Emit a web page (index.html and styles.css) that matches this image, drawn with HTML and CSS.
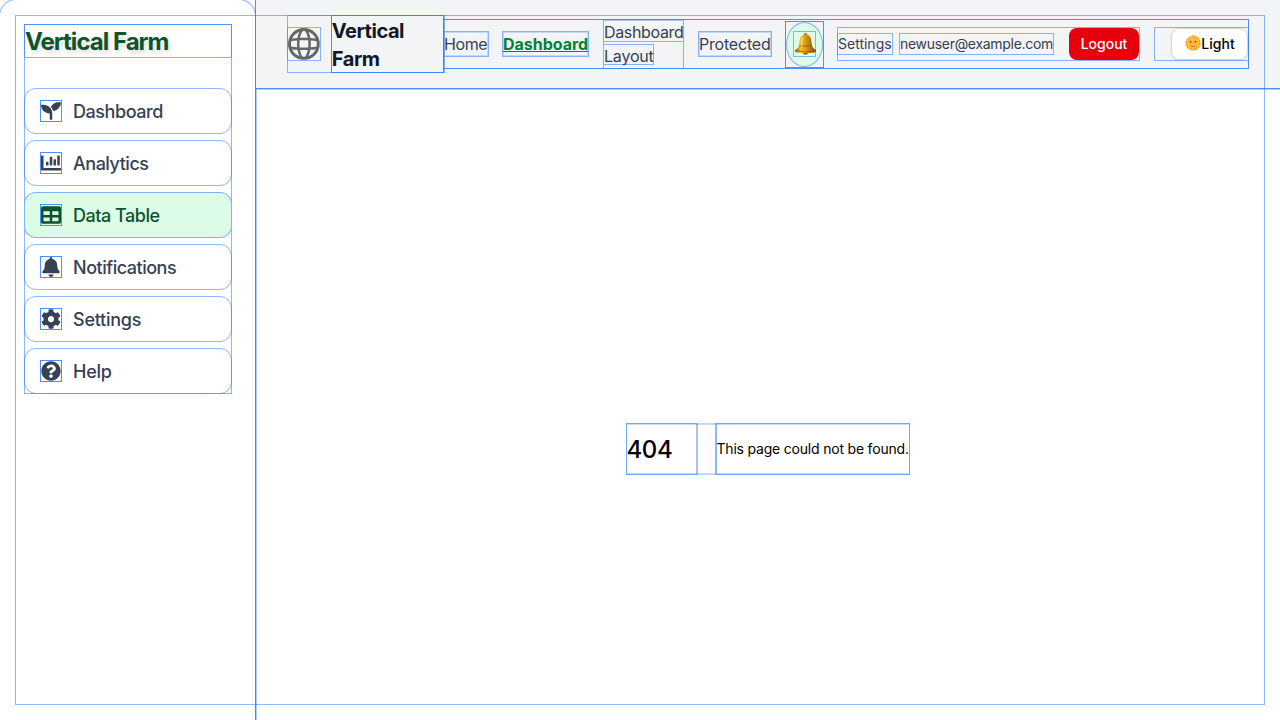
FILE: index.html
```html
<!DOCTYPE html>
<html lang="en">
<head>
<meta charset="utf-8">
<title>Vertical Farm</title>
<link rel="stylesheet" href="styles.css">
</head>
<body>
<div class="app">
  <aside class="sidebar">
    <h2 class="sidebar-title">Vertical Farm</h2>
    <nav class="menu">
      <a class="item"><span class="icon"><svg viewBox="0 0 512 512"><path d="M64 96H0c0 123.700 100.300 224 224 224v144c0 8.800 7.200 16 16 16h32c8.800 0 16-7.200 16-16V320C288 196.300 187.700 96 64 96zm384-64c-84.200 0-157.400 46.500-195.700 115.200 27.700 30.200 48.200 66.900 59 107.600C424 243.100 512 147.900 512 32h-64z"/></svg></span><span class="label t1">Dashboard</span></a>
      <a class="item"><span class="icon"><svg viewBox="0 0 512 512"><path d="M332.800 320h38.400c6.400 0 12.800-6.400 12.800-12.800V172.800c0-6.400-6.400-12.800-12.800-12.800h-38.400c-6.400 0-12.800 6.400-12.800 12.800v134.400c0 6.400 6.400 12.800 12.800 12.800zm96 0h38.400c6.400 0 12.800-6.400 12.800-12.800V76.800c0-6.400-6.400-12.800-12.800-12.800h-38.400c-6.400 0-12.800 6.400-12.800 12.800v230.400c0 6.400 6.400 12.800 12.800 12.800zm-288 0h38.400c6.400 0 12.800-6.400 12.800-12.800v-70.400c0-6.400-6.400-12.800-12.800-12.800h-38.400c-6.400 0-12.800 6.400-12.800 12.800v70.400c0 6.400 6.400 12.800 12.800 12.800zm96 0h38.400c6.400 0 12.800-6.400 12.800-12.800V108.800c0-6.400-6.400-12.800-12.800-12.800h-38.400c-6.400 0-12.800 6.400-12.800 12.800v198.400c0 6.400 6.400 12.800 12.800 12.800zM496 384H64V80c0-8.840-7.160-16-16-16H16C7.160 64 0 71.160 0 80v336c0 17.670 14.330 32 32 32h464c8.840 0 16-7.160 16-16v-32c0-8.840-7.160-16-16-16z"/></svg></span><span class="label">Analytics</span></a>
      <a class="item active"><span class="icon"><svg viewBox="0 0 512 512"><path d="M464 32H48C21.490 32 0 53.490 0 80v352c0 26.510 21.490 48 48 48h416c26.510 0 48-21.490 48-48V80c0-26.510-21.490-48-48-48zM224 416H64v-96h160v96zm0-160H64v-96h160v96zm224 160H288v-96h160v96zm0-160H288v-96h160v96z"/></svg></span><span class="label">Data Table</span></a>
      <a class="item"><span class="icon"><svg viewBox="0 0 448 512"><path d="M224 512c35.320 0 63.970-28.650 63.970-64H160.030c0 35.350 28.650 64 63.970 64zm215.390-149.710c-19.320-20.760-55.470-51.990-55.470-154.290 0-77.700-54.480-139.900-127.940-155.160V32c0-17.670-14.320-32-31.980-32s-31.980 14.330-31.980 32v20.840C118.560 68.100 64.080 130.300 64.080 208c0 102.300-36.150 133.530-55.470 154.290-6 6.450-8.660 14.160-8.610 21.710.11 16.400 12.980 32 32.100 32h383.800c19.120 0 32-15.600 32.100-32 .05-7.550-2.610-15.270-8.610-21.710z"/></svg></span><span class="label">Notifications</span></a>
      <a class="item"><span class="icon"><svg viewBox="0 0 512 512"><path d="M487.400 315.700l-42.600-24.600c4.300-23.200 4.300-47 0-70.200l42.600-24.600c4.900-2.800 7.100-8.600 5.500-14-11.100-35.600-30-67.800-54.700-94.600-3.800-4.100-10-5.100-14.800-2.300L380.800 110c-17.900-15.400-38.500-27.300-60.800-35.100V25.800c0-5.600-3.900-10.500-9.400-11.700-36.700-8.200-74.300-7.800-109.200 0-5.500 1.200-9.400 6.100-9.400 11.700V75c-22.200 7.900-42.800 19.800-60.800 35.100L88.700 85.500c-4.900-2.800-11-1.900-14.800 2.300-24.700 26.700-43.600 58.900-54.700 94.600-1.700 5.400.6 11.200 5.500 14L67.300 221c-4.300 23.200-4.300 47 0 70.200l-42.600 24.600c-4.900 2.800-7.100 8.600-5.500 14 11.100 35.600 30 67.800 54.700 94.600 3.800 4.100 10 5.100 14.800 2.300l42.600-24.600c17.900 15.400 38.500 27.300 60.800 35.100v49.200c0 5.600 3.900 10.500 9.400 11.700 36.700 8.200 74.300 7.800 109.200 0 5.500-1.200 9.400-6.100 9.400-11.700v-49.200c22.200-7.900 42.800-19.800 60.800-35.100l42.600 24.600c4.900 2.800 11 1.900 14.800-2.300 24.700-26.700 43.600-58.900 54.700-94.600 1.500-5.500-.7-11.300-5.600-14.100zM256 336c-44.100 0-80-35.900-80-80s35.900-80 80-80 80 35.900 80 80-35.900 80-80 80z"/></svg></span><span class="label t2">Settings</span></a>
      <a class="item"><span class="icon"><svg viewBox="0 0 512 512"><path d="M504 256c0 136.997-111.043 248-248 248S8 392.997 8 256C8 119.083 119.043 8 256 8s248 111.083 248 248zM262.655 90c-54.497 0-89.255 22.957-116.549 63.758-3.536 5.286-2.353 12.415 2.715 16.258l34.699 26.310c5.205 3.947 12.621 3.008 16.665-2.122 17.864-22.658 30.113-35.797 57.303-35.797 20.429 0 45.698 13.148 45.698 32.958 0 14.976-12.363 22.667-32.534 33.976C247.128 238.528 216 254.941 216 296v4c0 6.627 5.373 12 12 12h56c6.627 0 12-5.373 12-12v-1.333c0-28.462 83.186-29.647 83.186-106.667 0-58.002-60.165-102-116.531-102zM256 338c-25.365 0-46 20.635-46 46 0 25.364 20.635 46 46 46s46-20.636 46-46c0-25.364-20.635-46-46-46z"/></svg></span><span class="label t2">Help</span></a>
    </nav>
  </aside>
  <div class="main">
    <header class="header">
      <div class="brand">
        <span class="globe"><svg viewBox="0 0 16 16"><path fill="#666" fill-rule="evenodd" d="M10.270 14.100a6.500 6.500 0 0 0 3.670-3.450q-1.240.21-2.700.34-.31 1.830-.97 3.100M8 16A8 8 0 1 0 8 0a8 8 0 0 0 0 16m.48-1.520a7 7 0 0 1-.96 0H7.500a4 4 0 0 1-.84-1.320q-.38-.89-.63-2.080a40 40 0 0 0 3.920 0q-.25 1.200-.63 2.080a4 4 0 0 1-.84 1.310zm2.940-4.760q1.660-.15 2.950-.43a7 7 0 0 0 0-2.580q-1.300-.27-2.950-.43a18 18 0 0 1 0 3.440m-1.270-3.540a17 17 0 0 1 0 3.640 39 39 0 0 1-4.300 0 17 17 0 0 1 0-3.640 39 39 0 0 1 4.300 0m1.100-1.170q1.450.13 2.690.34a6.500 6.500 0 0 0-3.670-3.440q.65 1.260.98 3.100M8.480 1.500l.01.02q.41.37.84 1.310.38.89.63 2.080a40 40 0 0 0-3.920 0q.25-1.200.63-2.080a4 4 0 0 1 .85-1.320 7 7 0 0 1 .96 0m-2.750.4a6.500 6.500 0 0 0-3.670 3.440 29 29 0 0 1 2.700-.34q.31-1.830.97-3.100M4.580 6.280q-1.660.16-2.950.43a7 7 0 0 0 0 2.580q1.300.27 2.950.43a18 18 0 0 1 0-3.440m.17 4.710q-1.450-.12-2.690-.34a6.500 6.500 0 0 0 3.670 3.440q-.65-1.270-.98-3.100"/></svg></span>
        <span class="brand-name">Vertical<br>Farm</span>
      </div>
      <nav class="topnav">
        <a class="link home">Home</a>
        <a class="link current">Dashboard</a>
        <a class="layout-link"><span class="line">Dashboard</span><span class="line short">Layout</span></a>
        <a class="link protected">Protected</a>
        <div class="bell"><div class="bell-circle"><span class="bell-box">
          <svg class="bell-icon" viewBox="0 0 22 22"><defs><linearGradient id="gold"><stop offset="0" stop-color="#8f5903"/><stop offset=".28" stop-color="#f4c633"/><stop offset=".5" stop-color="#d99b13"/><stop offset=".72" stop-color="#b87808"/><stop offset="1" stop-color="#704600"/></linearGradient></defs><ellipse cx="11" cy="2.200" rx="1.500" ry="1.600" fill="#b17a16"/><ellipse cx="11" cy="19.700" rx="2.700" ry="2" fill="#a56b12"/><path d="M11 2.500C7.400 2.500 5.700 5 5.300 9c-.3 4.500-1.300 6.300-4 8.200-.9.800-.3 2 1.200 2.300 5 .9 12 .9 17 0 1.500-.3 2.100-1.500 1.200-2.300-2.700-1.900-3.700-3.700-4-8.200-.4-4-2.100-6.500-5.700-6.500z" fill="url(#gold)"/><path d="M2 18q9 1.800 18 0M5.500 13q5.500 1 11 0" fill="none" stroke="#8a5808" stroke-width=".7"/><path d="M8.200 5.500q-1 3-.8 8" fill="none" stroke="#ffe98a" stroke-width="1"/></svg>
        </span></div></div>
        <div class="user">
          <a class="settings">Settings</a>
          <span class="email">newuser@example.com</span>
          <button class="logout">Logout</button>
        </div>
        <div class="theme"><button class="light"><svg class="sun" viewBox="0 0 16 16"><path fill="#f7a92c" d="M8 0l1.500 1.100L11.300.7l.9 1.600 1.900.4.200 1.900 1.400 1.300-.6 1.800.8 1.700-1.200 1.400v1.900l-1.800.8-.8 1.700-1.900-.1L8.600 16l-1.500-.9-1.900.4-1.100-1.500-1.900-.4-.3-1.900L.5 10.400 1 8.600.2 6.900l1.300-1.400.1-1.900 1.800-.6L4.300 1.200l1.900.2z"/><circle cx="8" cy="8" r="6.200" fill="#fdb93a"/><ellipse cx="5.700" cy="6.700" rx=".75" ry="1" fill="#68401c"/><ellipse cx="10.300" cy="6.700" rx=".75" ry="1" fill="#68401c"/><path d="M5.700 11q2.300 1.100 4.600 0" fill="none" stroke="#b86b18" stroke-width=".8"/></svg>Light</button></div>
      </nav>
    </header>
    <main class="content">
      <div class="error"><h1 class="code">404</h1><div class="message">This page could not be found.</div></div>
    </main>
  </div>
  <div class="frame"></div>
</div>
</body>
</html>
```
FILE: styles.css
```css
* { box-sizing: border-box; }
body { margin: 0; font-family: Inter, sans-serif; background: #fff; color: #000; }
.app { --line: rgba(59, 130, 255, .58); --strong: rgba(50, 125, 250, .85); position: relative; display: flex; width: 1280px; height: 720px; overflow: hidden; }
svg { display: block; }
.frame { position: absolute; inset: 15px; border: 1px solid var(--line); pointer-events: none; }

.sidebar { flex: none; width: 257px; margin: -1px 0 0 -1px; padding: 24px 23px 0 24px; border: solid var(--line); border-width: 1px 1px 0; border-radius: 17px 17px 0 0; }
.sidebar-title { margin: 0; height: 34px; border: 1px solid var(--strong); border-bottom-color: var(--line); font-size: 24px; line-height: 33px; font-weight: 700; letter-spacing: -.98px; color: #0d542b; text-shadow: 2px 3px 4px rgba(0, 0, 0, .15); width: 208px; }
.menu { display: flex; flex-direction: column; gap: 6px; width: 208px; height: 336px; padding-top: 30px; box-shadow: inset 1px 0 var(--line), inset -1px 0 var(--line), inset 0 -1px var(--line); }
.item { display: flex; align-items: center; gap: 11px; height: 46px; flex: none; padding-left: 15px; border: 1px solid var(--line); border-radius: 12px; font-size: 18px; line-height: 28px; font-weight: 500; color: #364153; }
.label { padding-top: 2px; letter-spacing: -.48px; }
.t1 { letter-spacing: -.44px; }
.t2 { letter-spacing: -.25px; }
.icon { width: 22px; height: 22px; border: 1px solid var(--strong); margin-top: -1px; }
.icon svg { width: 20px; height: 20px; fill: currentColor; }
.active { background: #dcfce7; color: #0d542b; }

.main { flex: 1; display: flex; flex-direction: column; box-shadow: -1px 0 var(--strong), inset 1px 0 rgba(59, 130, 246, .4); }
.header { flex: none; display: flex; height: 89px; padding: 15px 31px 0; background: #f3f4f6; border-bottom: 1px solid var(--strong); box-shadow: 0 1px rgba(59, 130, 246, .4); }
.brand { display: flex; width: 158px; height: 58px; border: 1px solid var(--line); flex: none; }
.globe { width: 34px; height: 34px; margin: 11px 10px 0 -1px; border: 1px solid var(--line); }
.brand-name { width: 114px; height: 58px; margin-top: -1px; border: 1px solid var(--strong); font-size: 20px; line-height: 28px; font-weight: 700; letter-spacing: -.45px; color: #101828; padding-top: 1px; }
.topnav { display: flex; align-items: center; width: 806px; height: 50px; margin: 4px 0 0 -2px; border: 1px solid var(--strong); flex: none; }
.link { height: 26px; border: 1px solid var(--line); box-shadow: inset 0 0 0 1px rgba(59, 130, 246, .25); font-size: 16px; line-height: 24px; color: #364153; white-space: nowrap; flex: none; }
.home { width: 46px; margin: 0 13px 0 -1px; letter-spacing: -.4px; }
.current { width: 87px; margin-right: 14px; font-weight: 700; letter-spacing: -.02px; color: #008236; text-decoration: underline; }
.layout-link { width: 81px; height: 50px; border: 1px solid var(--line); flex: none; margin-right: 14px; display: flex; flex-direction: column; gap: 2px; font-size: 16px; letter-spacing: -.35px; color: #364153; }
.line { height: 22px; line-height: 22px; border-bottom: 1px solid var(--line); border-top: 1px solid rgba(59, 130, 246, .4); }
.short { width: 50px; height: 21px; border-right: 1px solid var(--line); border-top-color: var(--line); letter-spacing: -.2px; }
.protected { width: 74px; margin-right: 13px; letter-spacing: -.2px; }
.bell { width: 39px; height: 47px; border: 1px solid var(--strong); margin-right: 13px; flex: none; }
.bell-circle { width: 37px; height: 45px; border: 1px solid var(--line); border-radius: 50%; background: #dcfce7; display: flex; align-items: center; justify-content: center; }
.bell-box { width: 23px; height: 26px; border: 1px solid var(--line); margin-left: -1px; }
.bell-icon { width: 23px; height: 23px; }
.user { width: 303px; height: 34px; border: 1px solid var(--line); display: flex; align-items: center; flex: none; margin-right: 14px; font-size: 14px; line-height: 20px; color: #364153; }
.settings { width: 56px; height: 22px; border: 1px solid var(--line); margin: 0 6px 0 -1px; }
.email { width: 155px; height: 22px; border: 1px solid var(--line); margin-right: 15px; letter-spacing: -.3px; }
.logout { font: 500 14px/20px Inter, sans-serif; width: 70px; height: 32px; padding: 0; border: 0; border-radius: 8px; background: #e7000b; color: #fff; }
.theme { width: 95px; height: 34px; border: 1px solid var(--line); display: flex; justify-content: flex-end; flex: none; }
.light { width: 77px; height: 32px; padding: 0 0 0 1px; border: 1px solid #d1d5dc; border-radius: 8px; background: #fff; color: #000; font: 500 14px/20px Inter, sans-serif; display: flex; align-items: center; justify-content: center; box-shadow: 0 1px 2px rgba(0, 0, 0, .08); }
.sun { width: 16px; height: 16px; margin-top: -2px; }

.content { height: 720px; flex: none; display: flex; align-items: center; justify-content: center; }
.error { display: flex; width: 284px; height: 52px; border: 2px solid rgba(59, 130, 246, .3); border-width: 2px 1px; }
.code { flex: none; width: 72px; height: 52px; margin: -2px 17px 0 -1px; border: 1px solid var(--line); border-right: 2px solid rgba(90, 130, 205, .5); font-size: 24px; line-height: 51px; font-weight: 500; letter-spacing: -.4px; text-indent: -.5px; }
.message { width: 195px; height: 52px; margin-top: -2px; border: 1px solid var(--line); border-left-width: 2px; font-size: 14px; line-height: 50px; letter-spacing: -.2px; text-indent: -.5px; white-space: nowrap; margin-right: -1px; flex: none; }
```
